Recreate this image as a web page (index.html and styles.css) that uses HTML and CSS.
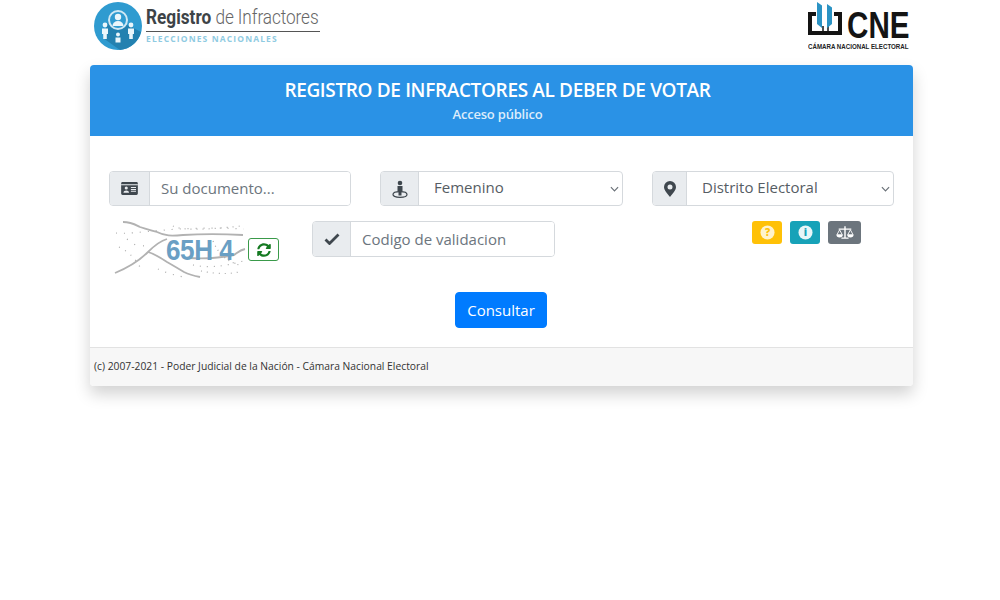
FILE: index.html
```html
<!DOCTYPE html>
<html lang="es">
<head>
<meta charset="utf-8">
<title>Registro de Infractores</title>
<link rel="stylesheet" href="styles.css">
</head>
<body>
<div class="page">
  <header class="brand">
    <div class="logo-left">
      <svg class="seal" viewBox="0 0 48 48" width="48" height="48">
        <circle cx="24" cy="24" r="24" fill="#2f9bd0"/>
        <path d="M16 14 L47 30 A24 24 0 0 1 26 48 L9 36Z" fill="#2381b0"/>
        <circle cx="24" cy="18" r="9" fill="#2f9bd0" stroke="#cfe8f4" stroke-width="2"/>
        <circle cx="24" cy="15" r="3.200" fill="#eaf6fb"/>
        <path d="M18.500 24a5.500 5 0 0 1 11 0z" fill="#eaf6fb"/>
        <circle cx="11" cy="23" r="2.400" fill="#eaf6fb"/>
        <path d="M8 26.500h6v5.500h-1.200v5h-3.600v-5H8z" fill="#eaf6fb"/>
        <circle cx="37" cy="23" r="2.400" fill="#eaf6fb"/>
        <path d="M34 26.500h6v5.500h-1.200v5h-3.600v-5H34z" fill="#eaf6fb"/>
        <circle cx="24" cy="32.500" r="2" fill="#eaf6fb"/>
        <path d="M21.500 35.500h5v5h-5z" fill="#eaf6fb"/>
      </svg>
      <div class="logo-text">
        <div class="logo-title"><div class="logo-title-in"><b>Registro</b> <span class="logo-light">de Infractores</span></div></div>
        <div class="logo-sub">ELECCIONES NACIONALES</div>
      </div>
    </div>
    <div class="logo-right">
      <div class="cne-top">
        <svg viewBox="0 0 34 33" width="34" height="33">
          <path d="M8 12H2v19h30V12h-6" fill="none" stroke="#141414" stroke-width="4"/>
          <path d="M15 24v5M20 24v5" stroke="#141414" stroke-width="1.500"/>
          <path d="M9 0l5 3.500V26l-5-4z" fill="#2b93c4"/>
          <path d="M19 2l5 3.500V22l-5 4z" fill="#2b93c4"/>
        </svg>
        <span class="cne-word">CNE</span>
      </div>
      <div class="cne-sub">CÁMARA NACIONAL ELECTORAL</div>
    </div>
  </header>

  <main class="card">
    <div class="card-head">
      <h1>REGISTRO DE INFRACTORES AL DEBER DE VOTAR</h1>
      <p>Acceso público</p>
    </div>
    <div class="card-body">
      <div class="row-fields">
        <div class="group">
          <span class="addon addon-doc">
            <svg viewBox="0 0 18 14" width="17" height="13"><path fill="#3f474e" d="M1.500 0h15A1.500 1.500 0 0 1 18 1.500v11a1.500 1.500 0 0 1-1.500 1.500h-15A1.500 1.500 0 0 1 0 12.500v-11A1.500 1.500 0 0 1 1.500 0z"/><path fill="#e9ecef" d="M0 2.500h18v1H0z"/><circle cx="5.500" cy="6.500" r="1.700" fill="#e9ecef"/><path fill="#e9ecef" d="M2.500 11.500c0-3.200 6-3.200 6 0zM10.500 5.500h5.500v1h-5.500zM10.500 7.500h5.500v1h-5.500zM10.500 9.500h5.500v1h-5.500z"/></svg>
          </span>
          <input class="field field-doc" type="text" placeholder="Su documento...">
        </div>
        <div class="group">
          <span class="addon addon-sex">
            <svg viewBox="0 0 16 18" width="16" height="18"><circle cx="8" cy="3" r="2.300" fill="#3f474e"/><path fill="#3f474e" d="M5.500 6h5v5.500H9.500v4h-3v-4H5.500z"/><ellipse cx="8" cy="14.500" rx="7" ry="2.800" fill="none" stroke="#3f474e" stroke-width="1.200"/></svg>
          </span>
          <div class="select"><span>Femenino</span><svg class="chev" viewBox="0 0 10 6" width="9" height="6"><path d="M1 1l4 4 4-4" fill="none" stroke="#6a7178" stroke-width="1.300"/></svg></div>
        </div>
        <div class="group">
          <span class="addon addon-pin">
            <svg viewBox="0 0 12 16" width="12" height="16"><path fill="#3f474e" fill-rule="evenodd" d="M6 0a6 6 0 0 1 6 6c0 3-3.500 7-6 10C3.500 13 0 9 0 6a6 6 0 0 1 6-6zm0 3.500a2.500 2.500 0 1 0 0 5 2.500 2.500 0 0 0 0-5z"/></svg>
          </span>
          <div class="select"><span>Distrito Electoral</span><svg class="chev" viewBox="0 0 10 6" width="9" height="6"><path d="M1 1l4 4 4-4" fill="none" stroke="#6a7178" stroke-width="1.300"/></svg></div>
        </div>
      </div>

      <div class="row-extra">
        <div class="captcha">
          <svg viewBox="0 0 135 58" width="135" height="58">
            <g fill="none" stroke="#b2b2b2" stroke-width="1.800">
              <path d="M10 1c8 0 11 2 17 5 6 2 10 3 17 5 8 4 14 4 26 3 18-1 40-1 60 0"/>
              <path d="M2 52c12-5 24-12 33-21 7-7 12-11 19-13"/>
              <path d="M35 31c7 2 13 6 19 10 7 4 12 7 17 10 6 3 11 4 16 5"/>
              <path d="M75 37c14 1 32 0 46-3 3-2 6-5 11-6"/>
            </g>
            <g fill="none" stroke="#a9a9a9" stroke-width="1.200">
              <path stroke-dasharray="1 7" d="M3 12c20 2 60-8 128-4"/>
              <path stroke-dasharray="1 6" d="M6 26c8 4 16 10 22 22"/>
              <path stroke-dasharray="1 5" d="M60 5c10 6 50 2 68 0"/>
              <path stroke-dasharray="1 6" d="M80 44c14 3 30 2 50-4"/>
              <path stroke-dasharray="1 5" d="M88 50c10 2 24 4 38 1"/>
              <path stroke-dasharray="1 8" d="M14 18c6 6 14 10 24 4"/>
              <path stroke-dasharray="1 4" d="M100 20c6 14 14 20 26 24"/>
              <path stroke-dasharray="1 7" d="M45 48c4 2 14 6 26 8"/>
            </g>
            <text class="captcha-text" transform="translate(53 39) scale(.87 1)">65H 4</text>
          </svg>
        </div>
        <button class="refresh" type="button" aria-label="Actualizar">
          <svg viewBox="0 0 512 512" width="14" height="14"><path fill="#157a22" d="M370.720 133.280C339.458 104.008 298.888 87.962 255.848 88c-77.458.068-144.328 53.178-162.791 126.850-1.344 5.363-6.122 9.150-11.651 9.150H24.103c-7.498 0-13.194-6.807-11.807-14.176C33.933 94.924 134.813 8 256 8c66.448 0 126.791 26.136 171.315 68.685L463.030 40.970C478.149 25.851 504 36.559 504 57.941V192c0 13.255-10.745 24-24 24H345.941c-21.382 0-32.090-25.851-16.971-40.971l41.750-41.749zM32 296h134.059c21.382 0 32.090 25.851 16.971 40.971l-41.750 41.750c31.262 29.273 71.835 45.319 114.876 45.280 77.418-.070 144.315-53.144 162.787-126.849 1.344-5.363 6.122-9.150 11.651-9.150h57.304c7.498 0 13.194 6.807 11.807 14.176C478.067 417.076 377.187 504 256 504c-66.448 0-126.791-26.136-171.315-68.685L48.970 471.030C33.851 486.149 8 475.441 8 454.059V320c0-13.255 10.745-24 24-24z"/></svg>
        </button>
        <div class="group group-code">
          <span class="addon addon-check">
            <svg viewBox="0 0 16 12" width="16" height="12"><path d="M1.500 6.500l4 4 9-9" fill="none" stroke="#3f474e" stroke-width="2.800"/></svg>
          </span>
          <input class="field" type="text" placeholder="Codigo de validacion">
        </div>
        <div class="actions">
          <span class="mini mini-warn"><svg viewBox="0 0 16 16" width="15" height="15"><circle cx="8" cy="8" r="7.500" fill="#fff3cd"/><text class="mini-glyph warn-glyph" x="8" y="12">?</text></svg></span>
          <span class="mini mini-info"><svg viewBox="0 0 16 16" width="15" height="15"><circle cx="8" cy="8" r="7.500" fill="#e8f6f8"/><text class="mini-glyph info-glyph" x="8" y="12">i</text></svg></span>
          <span class="mini mini-law"><svg viewBox="0 0 20 15" width="18" height="14"><path fill="#fff" d="M9.200 0h1.600v12.500H14V14H6v-1.500h3.200zM3 2.500h14V4H3z"/><path fill="none" stroke="#fff" stroke-width="1" d="M4 4L1 9.500h6zM16 4l-3 5.500h6z"/><path fill="#fff" d="M.5 9.500h7a3.500 3 0 0 1-7 0zM12.500 9.500h7a3.500 3 0 0 1-7 0z"/></svg></span>
        </div>
      </div>

      <div class="row-submit">
        <button class="submit" type="button">Consultar</button>
      </div>
    </div>
    <footer class="card-foot">(c) 2007-2021 - Poder Judicial de la Nación - Cámara Nacional Electoral</footer>
  </main>
</div>
</body>
</html>
```

FILE: styles.css
```css
* { box-sizing: border-box; }
html, body { margin: 0; padding: 0; background: #fff; }
body { font-family: "Open Sans", "Liberation Sans", sans-serif; color: #495057; }
.page { width: 823px; min-height: 600px; margin-left: 90px; }

.brand { height: 65px; display: flex; justify-content: space-between; align-items: flex-start; }
.logo-left { display: flex; margin-left: 4px; padding-top: 2px; gap: 4px; }
.seal { display: block; }
.logo-text { width: 174px; }
.logo-title { height: 30px; padding-top: 3px; border-bottom: 1px solid #555; white-space: nowrap; }
.logo-title-in { font-family: "Roboto", sans-serif; font-size: 20.500px; line-height: 24px; color: #666; transform: scaleX(.84); transform-origin: left center; }
.logo-title b { color: #3d4347; font-weight: 700; }
.logo-light { font-weight: 300; letter-spacing: -0.1px; }
.logo-sub { font-weight: 700; font-size: 8.500px; line-height: 12px; letter-spacing: 1.130px; color: #8fcbe2; white-space: nowrap; margin-top: 1px; }
.logo-right { width: 101px; margin-right: 4px; padding-top: 2px; }
.cne-top { display: flex; align-items: flex-start; height: 40px; gap: 5px; }
.cne-top svg { display: block; flex: none; }
.cne-word { display: block; width: 62px; font-family: "Liberation Sans", sans-serif; font-weight: 700; font-size: 37px; line-height: 28px; margin-top: 10px; color: #141414; transform: scaleX(.8); transform-origin: left center; }
.cne-sub { font-family: "Liberation Sans", sans-serif; font-weight: 700; font-size: 8px; line-height: 10px; color: #222; white-space: nowrap; transform: scaleX(.77); transform-origin: left center; }

.card { background: #fff; border-radius: 4px; overflow: hidden; box-shadow: 0 8px 16px rgba(0,0,0,.18); }
.card-head { height: 71px; background: #2a92e6; text-align: center; color: #fff; padding: 13px 8px 0 0; }
.card-head h1 { margin: 0; font-size: 19px; line-height: 24px; font-weight: 600; letter-spacing: -0.35px; }
.card-head p { margin: 3px 0 0; font-size: 13px; line-height: 18px; font-weight: 600; color: #dcecfb; letter-spacing: -0.2px; }

.card-body { height: 211px; padding: 35px 19px 0; }
.row-fields { display: grid; grid-template-columns: 242px 243px 242px; column-gap: 29px; }
.group { display: flex; height: 35px; border: 1px solid #d5d9dd; border-radius: 4px; background: #fff; overflow: hidden; }
.addon { flex: none; display: flex; align-items: center; justify-content: center; background: #e9ecef; border-right: 1px solid #d5d9dd; }
.addon-doc { width: 40px; }
.addon-sex { width: 38px; }
.addon-pin { width: 34px; }
.addon-check { width: 38px; }
.field { flex: 1; min-width: 0; border: 0; outline: 0; padding: 0 11px 1px; font: 400 15px "Open Sans", sans-serif; color: #495057; background: #fff; }
.field-doc { padding-bottom: 2px; }
.field::placeholder { color: #6c757d; opacity: 1; }
.select { flex: 1; display: flex; align-items: center; justify-content: space-between; padding: 0 3px 3px 15px; font-size: 15px; color: #565d64; }
.chev { display: block; margin-top: 4px; }

.row-extra { display: flex; align-items: flex-start; height: 86px; padding-top: 15px; }
.captcha { width: 135px; height: 58px; margin-left: 4px; flex: none; }
.captcha svg { display: block; }
.captcha-text { font-family: "Liberation Sans", sans-serif; font-weight: 700; font-size: 30px; fill: #6a9fc4; letter-spacing: -0.5px; }
.refresh { flex: none; width: 31px; height: 23px; margin-top: 17px; padding: 0; border: 1px solid #3a9a4a; border-radius: 3px; background: #fff; display: flex; align-items: center; justify-content: center; }
.group-code { width: 243px; height: 36px; margin-left: 33px; }
.actions { display: flex; gap: 8px; margin-left: 197px; }
.mini { height: 23px; border-radius: 3px; display: flex; align-items: center; justify-content: center; }
.mini svg { display: block; }
.mini-warn { width: 30px; background: #ffc107; }
.mini-info { width: 30px; background: #17a2b8; }
.mini-law { width: 33px; background: #6c757d; }
.mini-glyph { font-weight: 800; font-size: 11px; text-anchor: middle; }
.warn-glyph { fill: #ffc107; }
.info-glyph { fill: #17a2b8; }

.row-submit { display: flex; justify-content: center; padding-right: 2px; }
.submit { width: 92px; height: 36px; border: 1px solid #007bff; border-radius: 4px; background: #007bff; color: #fff; font: 400 15px "Open Sans", sans-serif; padding: 0 0 0 1px; }

.card-foot { height: 39px; background: #f7f7f7; border-top: 1px solid #e2e2e2; padding: 0 4px; font-size: 10.300px; line-height: 37px; color: #333; white-space: nowrap; }
```
